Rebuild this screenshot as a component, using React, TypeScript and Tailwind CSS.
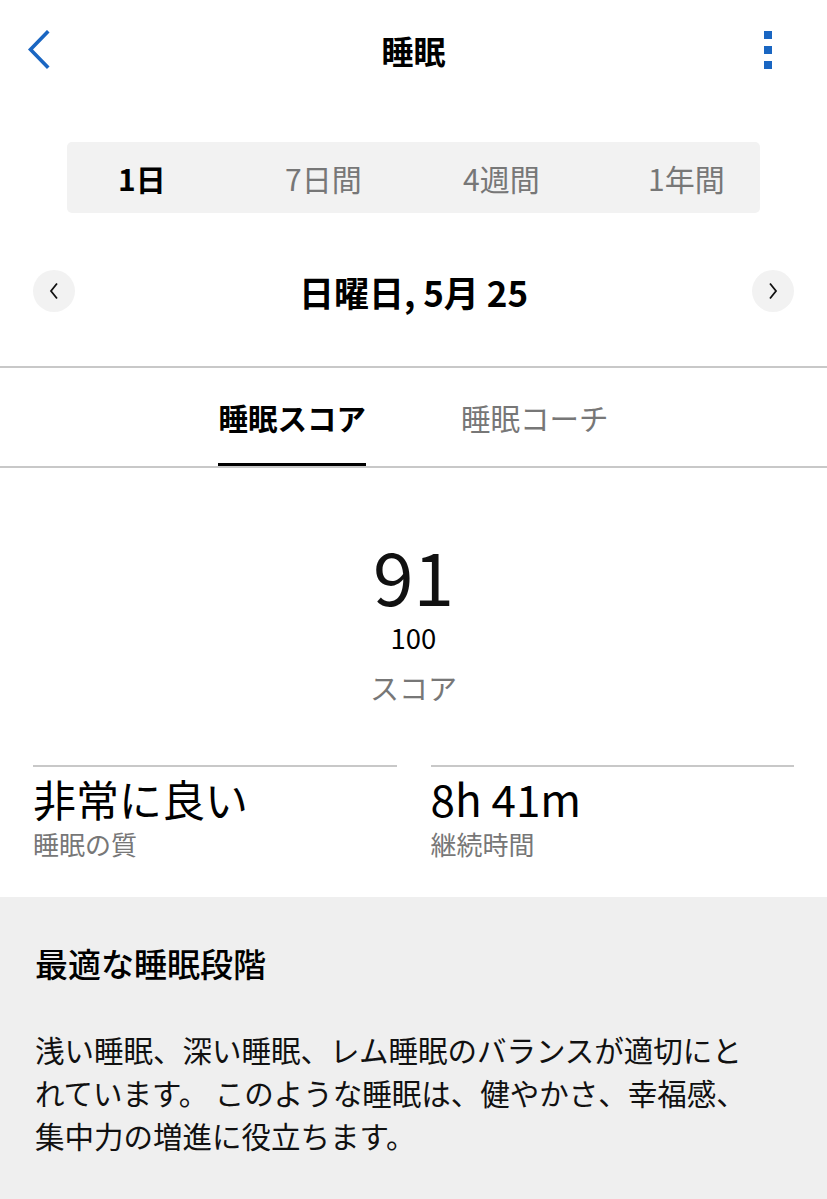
const font = "font-['Noto_Sans_CJK_JP','Noto_Sans',sans-serif]";

function Header() {
  return (
    <header className="grid h-[100px] grid-cols-[1fr_auto_1fr] items-center pl-[27px] pr-[55px]">
      <button type="button" aria-label="戻る" className="flex h-10 w-10 items-center justify-start">
        <svg width="24" height="40" viewBox="0 0 24 40" fill="none" aria-hidden>
          <path d="M20 2.5 L3.5 19.5 L20 36.5" stroke="#1a66c2" strokeWidth="3.6" strokeLinecap="square" />
        </svg>
      </button>
      <h1 className="pl-[28px] text-[32px] font-bold leading-none text-black">睡眠</h1>
      <button
        type="button"
        aria-label="メニュー"
        className="flex h-10 w-10 flex-col items-end justify-center gap-[7px] justify-self-end"
      >
        <span className="h-[8px] w-[8px] bg-[#1a66c2]" />
        <span className="h-[8px] w-[8px] bg-[#1a66c2]" />
        <span className="h-[8px] w-[8px] bg-[#1a66c2]" />
      </button>
    </header>
  );
}

function RangeTabs() {
  let items = ["1日", "7日間", "4週間", "1年間"];
  return (
    <div className="mx-[67px] mt-[42px] grid h-[71px] grid-cols-[167px_178px_185px_1fr] items-center rounded-[5px] bg-[#f2f2f2] pl-[51px]">
      {items.map((label, i) => (
        <span
          key={label}
          className={`text-[30px] leading-none ${i === 0 ? "font-bold text-black" : "text-[#777]"}`}
        >
          {label}
        </span>
      ))}
    </div>
  );
}

function Arrow({ dir }: { dir: "left" | "right" }) {
  return (
    <button
      type="button"
      aria-label={dir === "left" ? "前の日" : "次の日"}
      className="flex h-[42px] w-[42px] items-center justify-center rounded-full bg-[#f2f2f2]"
    >
      <svg width="10" height="18" viewBox="0 0 10 18" fill="none" aria-hidden>
        <path
          d={dir === "left" ? "M8 1.5 L2 9 L8 16.5" : "M2 1.5 L8 9 L2 16.5"}
          stroke="#111"
          strokeWidth="1.8"
        />
      </svg>
    </button>
  );
}

function DateRow() {
  return (
    <div className="mt-[57px] flex items-center justify-between px-[33px]">
      <Arrow dir="left" />
      <span className="text-[35px] font-bold leading-none text-black">日曜日, 5月 25</span>
      <Arrow dir="right" />
    </div>
  );
}

function ScoreTabs() {
  return (
    <div className="mt-[54px] border-y-2 border-[#c8c8c8]">
      <div className="flex h-[98px] items-stretch justify-center gap-[95px]">
        <span className="flex items-center border-b-[3px] border-black pt-[3px] text-[29.5px] font-bold text-black">
          睡眠スコア
        </span>
        <span className="flex items-center text-[29.5px] text-[#777]">睡眠コーチ</span>
      </div>
    </div>
  );
}

function Stat({ value, label, size }: { value: string; label: string; size: string }) {
  return (
    <div className="border-t-2 border-[#c8c8c8] pt-[4px]">
      <div className={`${size} leading-[54px] text-black`}>{value}</div>
      <div className="text-[26px] leading-[38px] text-[#777]">{label}</div>
    </div>
  );
}

function Score() {
  return (
    <section className="flex flex-col items-center pt-[66px]">
      <span className="text-[73px] leading-[80px] text-[#111]">91</span>
      <span className="mt-[6px] text-[27.5px] leading-[34px] text-black">100</span>
      <span className="mt-[13px] text-[29px] leading-[40px] text-[#777]">スコア</span>
    </section>
  );
}

export default function App() {
  return (
    <div className={`${font} min-h-[1199px] w-[827px] bg-white`}>
      <Header />
      <RangeTabs />
      <DateRow />
      <ScoreTabs />
      <Score />
      <div className="mt-[58px] grid grid-cols-2 gap-[34px] px-[33px] pb-[34px]">
        <Stat value="非常に良い" label="睡眠の質" size="text-[43px]" />
        <Stat value="8h 41m" label="継続時間" size="text-[44px]" />
      </div>
      <section className="min-h-[303px] bg-[#efefef] pt-[46px] pb-[40px] pl-[35px] pr-[72px]">
        <h2 className="text-[33px] font-medium leading-[40px] text-black">最適な睡眠段階</h2>
        <p className="mt-[45px] text-[29.5px] leading-[43px] text-[#111]">
          浅い睡眠、深い睡眠、レム睡眠のバランスが適切にとれています。 このような睡眠は、健やかさ、幸福感、集中力の増進に役立ちます。
        </p>
      </section>
    </div>
  );
}
